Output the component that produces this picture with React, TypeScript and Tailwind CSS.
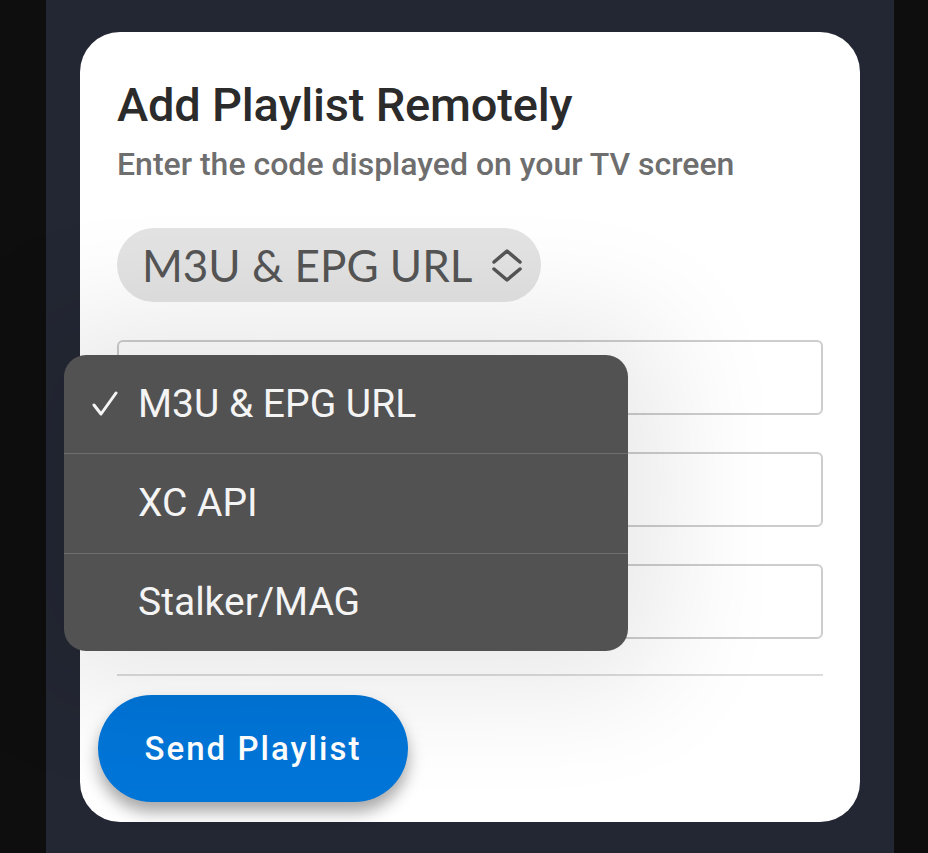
import React from "react";

export default function App() {
  return (
    <div className="flex h-[853px] w-[928px] bg-[#0e0e0e]" style={{ fontFamily: "Roboto, 'Liberation Sans', sans-serif" }}>
      <div className="ml-[46px] h-full w-[848px] bg-[#232733] pt-[32px]">
        <div className="relative ml-[34px] h-[790px] w-[780px] rounded-[40px] bg-white pl-[37px] pr-[37px] pt-[45px]">
          <h1 className="whitespace-nowrap text-[47px] font-medium leading-[56px] tracking-[-0.2px] text-[#2b2b2b]">Add Playlist Remotely</h1>
          <p className="mt-[12px] whitespace-nowrap text-[32px] font-medium leading-[38px] text-[#6e6e6e]">Enter the code displayed on your TV screen</p>
          <div className="mt-[45px] flex h-[74px] w-[424px] items-center rounded-full bg-[#e3e3e3] pl-[25px]">
            <span className="whitespace-nowrap text-[44px] leading-none text-[#555555]" style={{ fontFamily: "Lato, sans-serif" }}>M3U &amp; EPG URL</span>
            <svg className="ml-[19px]" width="32" height="40" viewBox="0 0 32 40" fill="none" stroke="#555555" strokeWidth="3.5" strokeLinecap="round" strokeLinejoin="round">
              <path d="M3 17 L16 6 L29 17" />
              <path d="M3 24 L16 35 L29 24" />
            </svg>
          </div>
          <div className="mt-[38px] flex flex-col gap-[37px]">
            <div className="h-[75px] w-[706px] rounded-[6px] border-2 border-[#cdcdcd]" />
            <div className="h-[75px] w-[706px] rounded-[6px] border-2 border-[#cdcdcd]" />
            <div className="h-[75px] w-[706px] rounded-[6px] border-2 border-[#cdcdcd]" />
          </div>
          <div className="mt-[35px] h-[2px] w-[706px] bg-[#dcdcdc]" />
          <button className="ml-[-19px] mt-[19px] flex h-[107px] w-[310px] items-center justify-center rounded-full bg-[#0075d8] text-[33px] font-medium tracking-[2px] text-white shadow-[0_10px_16px_rgba(0,0,0,0.35)]">
            Send Playlist
          </button>

          <div className="absolute left-[-16px] top-[323px] w-[564px] overflow-hidden rounded-[22px] bg-[#525252] shadow-[0_0_120px_40px_rgba(0,0,0,0.09)]">
            <div className="flex h-[99px] items-center border-b border-[#6e6e6e]">
              <span className="flex w-[74px] pl-[28px]">
                <svg width="26" height="26" viewBox="0 0 26 26" fill="none" stroke="#f4f4f4" strokeWidth="3" strokeLinecap="round" strokeLinejoin="round">
                  <path d="M2 14 L9 23 L24 2" />
                </svg>
              </span>
              <span className="whitespace-nowrap text-[39px] text-[#f4f4f4]">M3U &amp; EPG URL</span>
            </div>
            <div className="flex h-[100px] items-center border-b border-[#6e6e6e]">
              <span className="w-[74px]" />
              <span className="whitespace-nowrap text-[39px] text-[#f4f4f4]">XC API</span>
            </div>
            <div className="flex h-[97px] items-center">
              <span className="w-[74px]" />
              <span className="whitespace-nowrap text-[39px] text-[#f4f4f4]">Stalker/MAG</span>
            </div>
          </div>
        </div>
      </div>
    </div>
  );
}
